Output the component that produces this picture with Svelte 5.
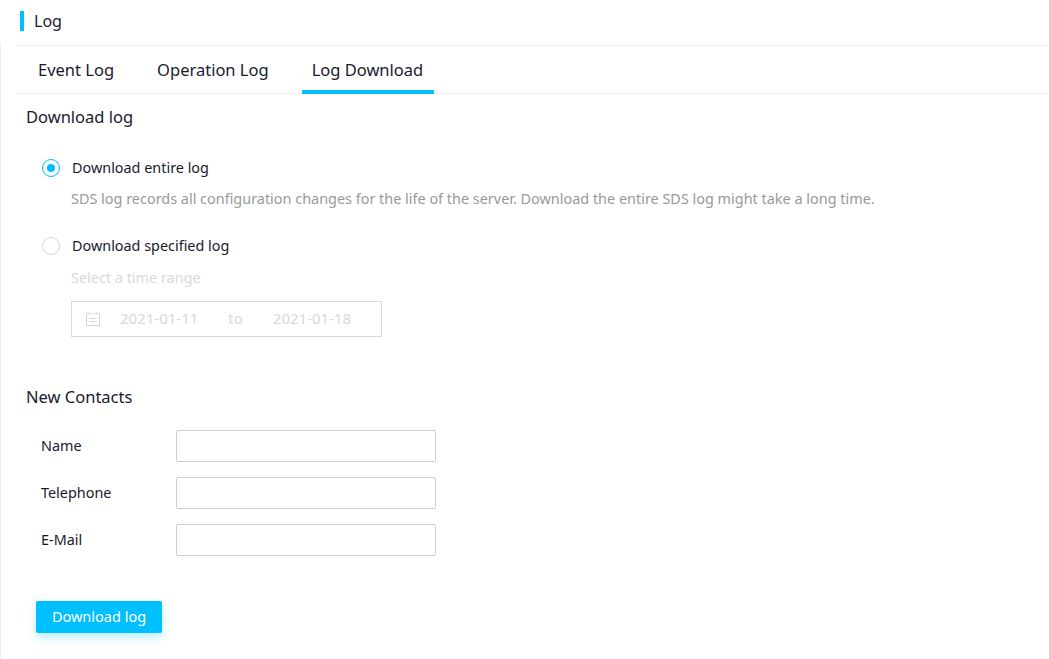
<script>
	const tabs = ['Event Log', 'Operation Log', 'Log Download'];
	const contacts = ['Name', 'Telephone', 'E-Mail'];
</script>

<div class="page">
	<header class="title-bar">
		<span class="title-mark"></span>
		<span class="title">Log</span>
	</header>

	<main class="content">
		<nav class="tabs">
			{#each tabs as tab, i}
				<span class="tab" class:active={i === 2}>{tab}</span>
			{/each}
		</nav>

		<section class="download">
			<h2 class="section-title">Download log</h2>

			<div class="radio-row first">
				<span class="radio checked"></span>
				<span class="radio-label">Download entire log</span>
			</div>
			<p class="hint">SDS log records all configuration changes for the life of the server. Download the entire SDS log might take a long time.</p>

			<div class="radio-row second">
				<span class="radio"></span>
				<span class="radio-label">Download specified log</span>
			</div>
			<p class="hint disabled">Select a time range</p>

			<div class="range">
				<svg class="range-icon" width="14" height="14" viewBox="0 0 14 14" fill="none" stroke="#d4d4d4" stroke-width="1">
					<path d="M2.5 1.5H0.5V13.5H13.5V1.5H11.5" />
					<path d="M4.5 1.5H5.5M8.5 1.5H9.5M3.5 0.5V2.5M10.5 0.5V2.5M7 0.5V2.5" />
					<path d="M3.5 6.5H10.5M3.5 9.5H10.5" />
				</svg>
				<span class="range-date">2021-01-11</span>
				<span class="range-to">to</span>
				<span class="range-date">2021-01-18</span>
			</div>
		</section>

		<section class="contacts">
			<h2 class="section-title">New Contacts</h2>
			<div class="fields">
				{#each contacts as label}
					<div class="field">
						<label class="field-label" for={label}>{label}</label>
						<input class="field-input" id={label} type="text" />
					</div>
				{/each}
			</div>
			<button class="primary" type="button">Download log</button>
		</section>
	</main>
</div>

<style>
	:global(body) {
		background: #fff;
		font-family: "Noto Sans", "Open Sans", sans-serif;
		color: #1a1a2e;
	}

	.page {
		height: 659px;
		overflow: hidden;
		box-sizing: border-box;
	}

	/* title */
	.title-bar {
		display: flex;
		align-items: center;
		height: 42px;
		margin-bottom: 1px;
		padding-left: 20px;
	}

	.title-mark {
		width: 4px;
		height: 20px;
		background: #00bfff;
		margin-right: 10px;
	}

	.title {
		font-size: 16px;
		line-height: 20px;
	}

	/* content */
	.content {
		border-left: 1px solid #eeeef8;
		padding: 2px 0 0 15px;
		height: 614px;
	}

	.tabs {
		display: flex;
		height: 49px;
		box-sizing: border-box;
		padding-left: 12px;
		gap: 23px;
		border-top: 1px solid #eeeef6;
		border-bottom: 1px solid #eeeef6;
	}

	.tab {
		padding: 0 10px;
		font-size: 16.5px;
		line-height: 48px;
		height: 48px;
		box-sizing: border-box;
	}

	.tab.active {
		padding-right: 11px;
		border-bottom: 4px solid #00bfff;
	}

	.section-title {
		margin: 0;
		font-size: 16.5px;
		font-weight: 400;
		line-height: 22px;
		padding-left: 10px;
	}

	.download {
		padding-top: 12px;
	}

	.radio-row {
		display: flex;
		align-items: center;
		height: 20px;
		padding-left: 26px;
		font-size: 14.4px;
	}

	.radio-row.first {
		margin-top: 30px;
	}

	.radio-row.second {
		margin-top: 27px;
	}

	.radio-label {
		margin-top: -2px;
	}

	.radio {
		width: 18px;
		height: 18px;
		box-sizing: border-box;
		border: 1px solid #d4d4dc;
		border-radius: 50%;
		margin-right: 12px;
		display: flex;
		align-items: center;
		justify-content: center;
	}

	.radio.checked {
		border: 1.5px solid #00bfff;
	}

	.radio.checked::after {
		content: '';
		width: 8px;
		height: 8px;
		border-radius: 50%;
		background: #00bfff;
	}

	.hint {
		margin: 11px 0 0 55px;
		font-size: 14.43px;
		line-height: 20px;
		color: #999;
	}

	.hint.disabled {
		color: #d9d9d9;
		margin-top: 12px;
	}

	.range {
		display: flex;
		align-items: center;
		width: 311px;
		height: 36px;
		box-sizing: border-box;
		margin: 13px 0 0 55px;
		padding: 0 0 2px 14px;
		border: 1px solid #d9d9d9;
		font-size: 15px;
		color: #d9d9d9;
	}

	.range-icon {
		margin: 2px 20px 0 0;
	}

	.range-to {
		margin: 0 30px;
	}

	/* contacts */
	.contacts {
		padding-top: 49px;
	}

	.fields {
		margin-top: 22px;
		display: flex;
		flex-direction: column;
		gap: 15px;
	}

	.field {
		display: flex;
		align-items: center;
		padding-left: 25px;
	}

	.field-label {
		width: 135px;
		font-size: 14.4px;
		margin-top: -2px;
	}

	.field-input {
		width: 260px;
		height: 32px;
		box-sizing: border-box;
		border: 1px solid #cdcdd9;
		border-radius: 2px;
		background: #fff;
		outline: none;
	}

	.primary {
		display: block;
		margin: 45px 0 0 20px;
		width: 126px;
		height: 32px;
		padding: 0 0 2px;
		border: none;
		border-radius: 2px;
		background: #00bfff;
		color: #fff;
		font-family: inherit;
		font-size: 14.5px;
		box-shadow: 0 4px 10px rgba(0, 191, 255, 0.3);
	}
</style>
